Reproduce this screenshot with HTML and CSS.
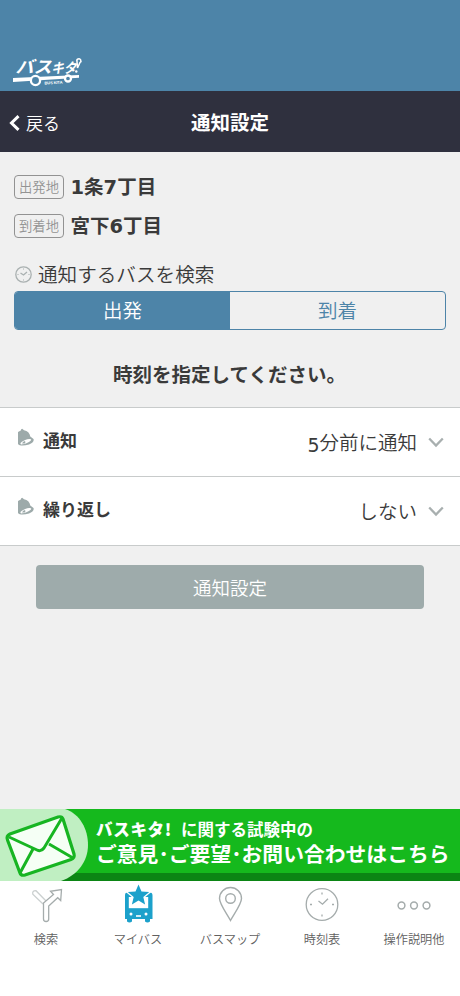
FILE: index.html
```html
<!DOCTYPE html>
<html lang="ja">
<head>
<meta charset="utf-8">
<title>通知設定</title>
<link rel="stylesheet" href="styles.css">
</head>
<body>
<div class="app">
  <div class="brand">
    <svg class="logo" width="72" height="32" viewBox="0 0 72 32">
      <g fill="none" stroke="#fff" stroke-width="2.200">
        <text class="logo-name" fill="#fff" stroke="none" transform="translate(3.500 17) skewX(-16)"><tspan font-size="17" textLength="36" lengthAdjust="spacingAndGlyphs">バス</tspan><tspan x="35.500" font-size="14" textLength="25" lengthAdjust="spacingAndGlyphs">キタ</tspan></text>
        <path d="M65.500 12 65 5.500a2 2 0 1 1 3 1Z" stroke-width="1.500"/>
      </g>
      <circle cx="64.300" cy="15.500" r="1.200" fill="#fff"/>
      <path d="M1 22 67 19v2.800L1 26Z" fill="#fff"/>
      <g fill="#4d84a8" stroke="#fff" stroke-width="2.300"><circle cx="23.500" cy="24.500" r="4.600"/><circle cx="56" cy="22.500" r="3"/></g>
      <text class="logo-sub" x="32.500" y="28.500" textLength="18" transform="rotate(-3 32 27)">BUS KITA</text>
    </svg>
  </div>
  <header class="bar">
    <a class="back"><svg width="11" height="16" viewBox="0 0 11 16"><path d="M9.500 1.200 2.500 8l7 6.800" fill="none" stroke="#fff" stroke-width="3"/></svg><span>戻る</span></a>
    <h1>通知設定</h1>
  </header>
  <main>
    <section class="route">
      <div class="stop"><span class="tag">出発地</span><strong>1条7丁目</strong></div>
      <div class="stop"><span class="tag">到着地</span><strong>宮下6丁目</strong></div>
    </section>
    <h2 class="find"><svg width="18" height="18" viewBox="0 0 18 18" fill="none" stroke="#a9b0b0"><circle cx="9.500" cy="9.500" r="7.700" stroke-width="1.300"/><path d="m6.500 8 3 2 3.500-3" stroke-width="1.300"/><path d="M9.500 3.500v1M9.500 14.500v1M3.500 9.500h1M14.500 9.500h1"/></svg><span>通知するバスを検索</span></h2>
    <div class="segments"><span class="segment active">出発</span><span class="segment">到着</span></div>
    <p class="prompt">時刻を指定してください。</p>
    <div class="list">
      <div class="row"><svg class="bell" width="17" height="19" viewBox="0 0 17 19"><path d="M1 4 3.800 2.500Q4 .8 5.200.8L7 2.200C10.500 2.600 12.800 5 13.300 8.500L16.500 11c.8 2-1 4-4.500 5.500C7 18 2.500 18 1 16Z" fill="#9daaaa"/><ellipse cx="8.800" cy="13.700" rx="5.800" ry="1.700" transform="rotate(-22 8.800 13.700)" fill="#fff"/><path d="M5 15.500q1-2.500 3-2.500 1 1-.2 2.500Z" fill="#9daaaa"/></svg><b>通知</b><span class="value"><span class="digit">5</span>分前に通知</span><svg class="chevron" width="16" height="11" viewBox="0 0 16 11"><path d="m1.200 1.500 6.800 7 6.800-7" fill="none" stroke="#a8afaf" stroke-width="2.300"/></svg></div>
      <div class="row"><svg class="bell" width="17" height="19" viewBox="0 0 17 19"><path d="M1 4 3.800 2.500Q4 .8 5.200.8L7 2.200C10.500 2.600 12.800 5 13.300 8.500L16.500 11c.8 2-1 4-4.500 5.500C7 18 2.500 18 1 16Z" fill="#9daaaa"/><ellipse cx="8.800" cy="13.700" rx="5.800" ry="1.700" transform="rotate(-22 8.800 13.700)" fill="#fff"/><path d="M5 15.500q1-2.500 3-2.500 1 1-.2 2.500Z" fill="#9daaaa"/></svg><b>繰り返し</b><span class="value">しない</span><svg class="chevron" width="16" height="11" viewBox="0 0 16 11"><path d="m1.200 1.500 6.800 7 6.800-7" fill="none" stroke="#a8afaf" stroke-width="2.300"/></svg></div>
    </div>
    <button class="submit">通知設定</button>
  </main>
  <aside class="banner">
    <svg class="mail" width="90" height="72" viewBox="0 0 90 72"><path d="M0 0H65C80 5 88 20 88 36S78 66 61 72H0Z" fill="#c0efc2"/><path d="M10 25 58 8q4-1 5 2L74 45q1 4-3 5.500L25 66q-4 1-5-2L7.500 31Q6 27 10 25Z" fill="#f5fff5" stroke="#17b522" stroke-width="3.200"/><path d="M9 28 37 41q4 2 7-2L62 9M33 40 20 64M49 35l24 14" fill="none" stroke="#17b522" stroke-width="3"/></svg>
    <div class="banner-text"><p class="small"><b>バスキタ!</b><span>に関する試験中の</span></p><p class="large">ご意見･ご要望･お問い合わせはこちら</p></div>
  </aside>
  <nav>
    <a><svg width="40" height="40" viewBox="0 0 40 40" fill="#fff" stroke="#a5acac" stroke-width="1.300"><path d="m17 21-10.200-9.800q-.8-3.700 3.200-3.500L21 19" stroke="#cbd0d0"/><path d="M17.500 36V20l10-8.500-3-3.200L35.500 6.500l-.8 11-3-2.800-9 8.300v13q0 2.500-2.600 2.500T17.500 36Z"/></svg><span>検索</span></a>
    <a><svg width="40" height="40" viewBox="0 0 40 40"><path d="M9 9.500h23q2.500 0 2.500 3V36h-2.500v2.500q-2.500 2-5 0V36H14v2.500q-2.500 2-5 0V36H7V12.500q0-3 2-3Z" fill="#1ca1cb"/><path d="M10.800 14h19.400v11.200H10.800Z" fill="#fff"/><path d="m20.500 1.500 3 7 7.700.6-5.900 5 1.800 7.500-6.600-4-6.600 4 1.800-7.500-5.900-5 7.700-.6Z" fill="#1ca1cb" stroke="#fff" stroke-width="2.400" paint-order="stroke"/><circle cx="13" cy="31" r="1.500" fill="#fff"/><circle cx="28" cy="31" r="1.500" fill="#fff"/><path d="M18 33h5" stroke="#fff" stroke-width="1.600"/></svg><span>マイバス</span></a>
    <a><svg width="40" height="40" viewBox="0 0 40 40" fill="none" stroke="#a5acac" stroke-width="1.400"><path d="M20.500 37.500C17 31 9.500 21 9.500 15.500a11 11 0 0 1 22 0C31.500 21 24 31 20.500 37.500Z"/><circle cx="20.500" cy="15.500" r="4.800"/></svg><span>バスマップ</span></a>
    <a><svg width="40" height="40" viewBox="0 0 40 40" fill="none" stroke="#a5acac" stroke-width="1.300"><circle cx="20" cy="21.500" r="15.800"/><path d="m16.500 18 4 3.200 5.500-5.500M20 9.500v2M20 31.500v2M8 21.500h2M30 21.500h2"/></svg><span>時刻表</span></a>
    <a><svg width="40" height="40" viewBox="0 0 40 40" fill="none" stroke="#a5acac" stroke-width="1.500"><circle cx="7.500" cy="22.500" r="3.400"/><circle cx="20" cy="22.500" r="3.400"/><circle cx="32.500" cy="22.500" r="3.400"/></svg><span>操作説明他</span></a>
  </nav>
</div>
</body>
</html>
```
FILE: styles.css
```css
* { box-sizing: border-box; }
body { margin: 0; color: #3a3a3a; font-family: "DejaVu Sans", "Noto Sans CJK JP", sans-serif; background: #fff; }
h1, h2, p { margin: 0; }
svg { display: block; flex: none; }
.app { width: 460px; height: 996px; display: flex; flex-direction: column; overflow: hidden; white-space: nowrap; }
.brand { height: 91px; background: #4d84a8; padding: 56px 0 0 12px; }
.logo { overflow: visible; }
.logo-name { font-family: "Noto Sans CJK JP", sans-serif; font-weight: 700; }
.logo-sub { font: 700 4px "Liberation Sans", sans-serif; fill: #fff; }
.bar { height: 61px; background: #2f303e; color: #fff; display: grid; grid-template-columns: 1fr auto 1fr; align-items: center; }
.bar h1 { font: 700 19.5px/30px "Noto Sans CJK JP", sans-serif; }
.back { display: flex; align-items: center; gap: 6px; padding: 2px 0 0 9px; font: 350 17px/24px "Noto Sans CJK JP", sans-serif; }
main { height: 657px; background: #f0f0f0; display: flex; flex-direction: column; }
.route { padding: 15px 14px 0; }
.stop { height: 39px; display: flex; align-items: center; gap: 6.5px; }
.stop strong { font-size: 19.5px; line-height: 30px; padding-top: 2px; }
.tag { width: 50px; height: 24px; border: 1.500px solid #929292; border-radius: 4px; color: #939393; font: 350 13.3px/22px "Noto Sans CJK JP", sans-serif; text-align: center; }
.find { height: 34px; margin: 12px 0 0 14px; display: flex; align-items: center; gap: 6px; font: 350 19.6px/30px "Noto Sans CJK JP", sans-serif; }
.segments { height: 39px; margin: 0 14px; display: grid; grid-template-columns: 1fr 1fr; border: 1px solid #4d84a8; border-radius: 4px; overflow: hidden; }
.segment { text-align: center; color: #4d84a8; font: 350 19.5px/36px "Noto Sans CJK JP", sans-serif; }
.active { background: #4d84a8; color: #fff; }
.prompt { height: 77px; padding-top: 29px; font: 700 19.5px/30px "Noto Sans CJK JP", sans-serif; text-align: center; text-indent: -1px; }
.list { background: #fff; border-top: 1px solid #c8cbcb; }
.row { height: 69px; border-bottom: 1px solid #c8cbcb; display: flex; align-items: center; padding: 0 16px 0 17px; }
.row b { margin: 0 auto 4px 9px; font: 700 17px/26px "Noto Sans CJK JP", sans-serif; }
.bell { margin-bottom: 10px; }
.value { font: 350 19.5px/30px "Noto Sans CJK JP", sans-serif; }
.digit { font: 400 19px/20px "DejaVu Sans", sans-serif; vertical-align: -2px; }
.chevron { margin-left: 11px; }
.submit { height: 44px; margin: 19px 36px 0; border: 0; border-radius: 4px; background: #9eabab; color: #fff; font: 350 18.5px/43px "Noto Sans CJK JP", sans-serif; padding: 0; }
.banner { height: 72px; display: flex; gap: 6px; color: #fff; background: linear-gradient(#15b91d 64px, #0b8514 64px); font-family: "Noto Sans CJK JP", sans-serif; }
.banner-text { padding-top: 9px; }
.small { display: flex; gap: 9px; font-size: 16.5px; line-height: 22px; font-weight: 700; }
.small b { font-weight: 900; letter-spacing: .7px; }
.large { font-size: 20.8px; line-height: 26px; font-weight: 700; }
nav { height: 115px; display: grid; grid-template-columns: repeat(5, 1fr); background: #fff; }
nav a { display: flex; flex-direction: column; align-items: center; padding-top: 2px; color: #606060; font: 350 12.2px/18px "Noto Sans CJK JP", sans-serif; }
nav span { margin-top: 7px; }
```
